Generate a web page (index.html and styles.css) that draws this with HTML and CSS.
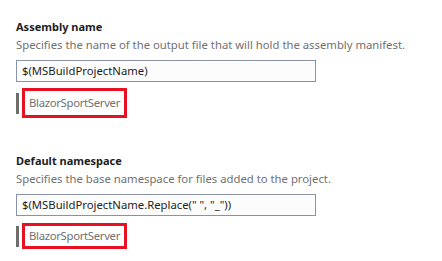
FILE: index.html
```html
<!DOCTYPE html>
<html>
<head>
<meta charset="utf-8">
<link rel="stylesheet" href="styles.css">
</head>
<body>
<div class="page">
  <section class="prop">
    <h2 class="prop-title">Assembly name</h2>
    <p class="prop-desc">Specifies the name of the output file that will hold the assembly manifest.</p>
    <div class="prop-input">$(MSBuildProjectName)</div>
    <div class="prop-value">
      <span class="value-bar"></span>
      <span class="value-text value-text--tall">BlazorSportServer</span>
    </div>
  </section>
  <section class="prop prop--next">
    <h2 class="prop-title">Default namespace</h2>
    <p class="prop-desc">Specifies the base namespace for files added to the project.</p>
    <div class="prop-input">$(MSBuildProjectName.Replace(" ", "_"))</div>
    <div class="prop-value prop-value--next">
      <span class="value-bar"></span>
      <span class="value-text">BlazorSportServer</span>
    </div>
  </section>
</div>
</body>
</html>
```

FILE: styles.css
```css
html, body {
  margin: 0;
  padding: 0;
  background: #ffffff;
}

body {
  font-family: "Noto Sans", "Open Sans", sans-serif;
  font-size: 11.3px;
  line-height: 16px;
  color: #1e1e1e;
}

.page {
  padding: 19px 0 0 16px;
}

.prop--next {
  margin-top: 35px;
}

.prop-title {
  margin: 0;
  font-size: 11px;
  line-height: 16px;
  font-weight: 700;
  color: #1e1e1e;
}

.prop-desc {
  margin: 2px 0 0;
  color: #717171;
}

.prop-input {
  box-sizing: border-box;
  margin-top: 7px;
  width: 300px;
  height: 22px;
  padding: 0 5px;
  line-height: 20px;
  border: 1px solid #8a93a5;
  background: #fcfcfc;
  color: #1e1e1e;
  white-space: nowrap;
}

.prop-value {
  display: flex;
  align-items: center;
  margin-top: 6px;
}

.prop-value--next {
  margin-top: 7px;
}

.value-bar {
  width: 3px;
  height: 21px;
  background: #6e6e6e;
  margin-right: 3px;
}

.value-text {
  box-sizing: border-box;
  height: 26px;
  padding: 2px 4px;
  border: 3px solid #e81123;
  color: #717171;
  letter-spacing: -0.3px;
  white-space: nowrap;
}

.value-text--tall {
  height: 30px;
  padding: 4px 4px;
}
```
